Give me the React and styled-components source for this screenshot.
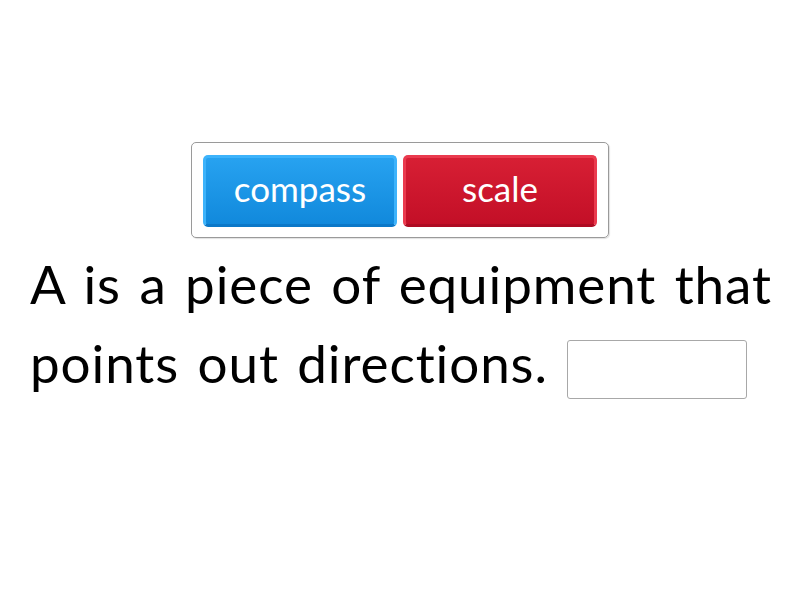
import React from "react";
import styled, { createGlobalStyle } from "styled-components";

const Global = createGlobalStyle`
  html, body { margin: 0; padding: 0; background: #fff; }
  body { width: 800px; height: 600px; overflow: hidden; font-family: Lato, "Noto Sans", sans-serif; }
`;

const Page = styled.div`
  width: 800px;
  height: 600px;
  display: flex;
  flex-direction: column;
  align-items: center;
  padding-top: 142px;
  box-sizing: border-box;
`;

const Bank = styled.div`
  display: flex;
  gap: 6px;
  padding: 12px 11px 10px 11px;
  border: 1px solid #9a9a9a;
  border-radius: 5px;
  box-shadow: 1px 1px 1px rgba(0, 0, 0, 0.12);
`;

const palette = {
  blue: { top: "#27a2f0", bottom: "#1189dc", edge: "#3db3fb", shade: "#0b78c8" },
  red: { top: "#d71f34", bottom: "#c30f27", edge: "#ea3a4e", shade: "#ae0b22" },
};

const Tile = styled.div`
  width: 194px;
  height: 72px;
  box-sizing: border-box;
  border-radius: 5px;
  display: flex;
  align-items: center;
  justify-content: center;
  color: #fff;
  font-family: Lato, "Noto Sans", sans-serif;
  font-size: 35px;
  font-variant-ligatures: none;
  padding-bottom: 6px;
  background: linear-gradient(${(p) => palette[p.$c].top}, ${(p) => palette[p.$c].bottom});
  border: 3px solid ${(p) => palette[p.$c].edge};
  border-bottom-color: ${(p) => palette[p.$c].shade};
`;

const Sentence = styled.div`
  width: 740px;
  margin-top: 6px;
  font-family: Lato, "Noto Sans", sans-serif;
  font-size: 53px;
  line-height: 79px;
  letter-spacing: 0.9px;
  word-spacing: 4px;
  font-variant-ligatures: none;
  color: #000;
  text-align: left;
  white-space: nowrap;
`;

const Blank = styled.span`
  display: inline-block;
  width: 180px;
  height: 59px;
  box-sizing: border-box;
  border: 1px solid #a8a8a8;
  border-radius: 3px;
  vertical-align: -16px;
  margin-left: 19px;
`;

export default function App() {
  return (
    <>
      <Global />
      <Page>
        <Bank>
          <Tile $c="blue">compass</Tile>
          <Tile $c="red">scale</Tile>
        </Bank>
        <Sentence>
          A is a piece of equipment that
          <br />
          points out directions.<Blank />
        </Sentence>
      </Page>
    </>
  );
}
